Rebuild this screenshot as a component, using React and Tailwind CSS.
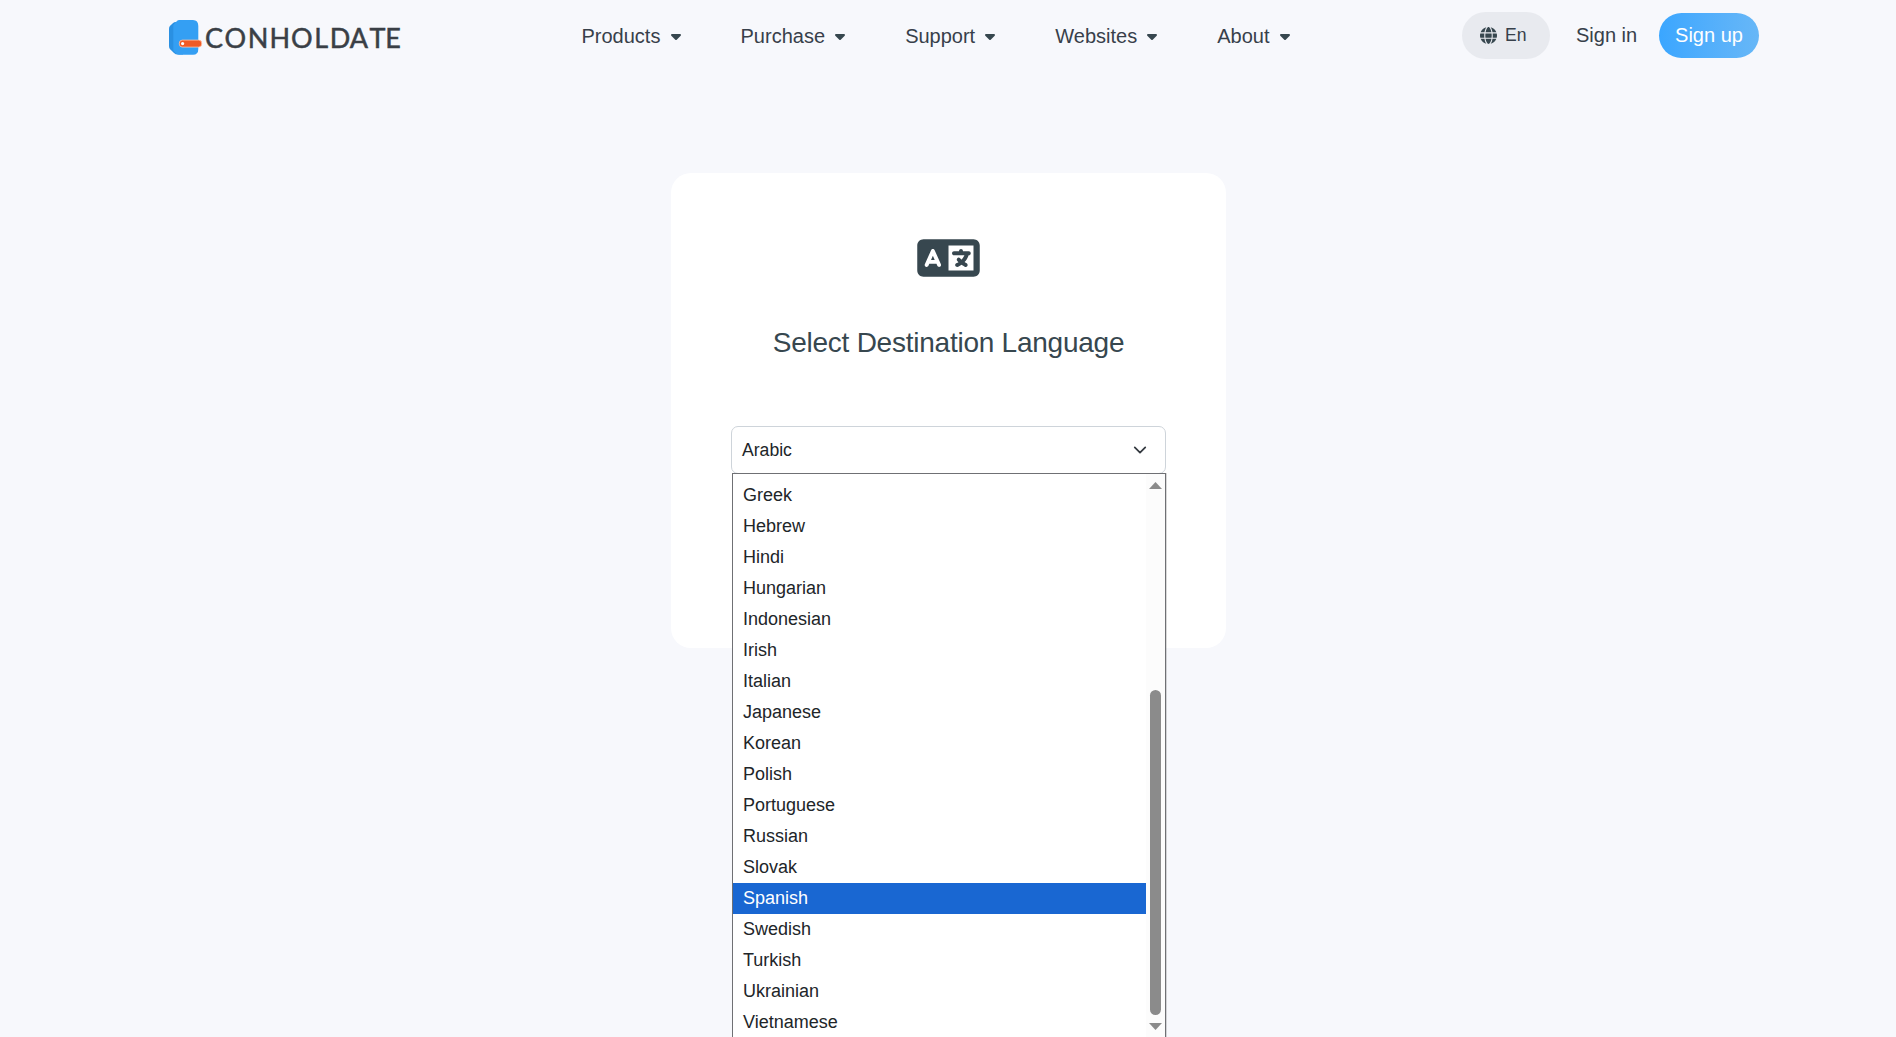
import { FaLanguage, FaCaretDown, FaGlobe } from "react-icons/fa6";

const menus = ["Products", "Purchase", "Support", "Websites", "About"];
const languages = [
  "Greek", "Hebrew", "Hindi", "Hungarian", "Indonesian", "Irish", "Italian", "Japanese", "Korean",
  "Polish", "Portuguese", "Russian", "Slovak", "Spanish", "Swedish", "Turkish", "Ukrainian", "Vietnamese",
];

function Logo() {
  return (
    <svg width="236" height="40" viewBox="0 0 236 40" className="block">
      <path d="M7 2Q5 2 3.800 3.200L.9 6Q0 7 0 9V26Q0 28 .9 29L5 33Q6.500 34.500 9 34.500H14V2Z" fill="#2a90e2" />
      <path d="M10 0H24Q29.300 0 29.300 6V29Q29.300 34.800 24 34.800H10Q8 34.800 6.500 33L4.300 30.500V5L7 2Q8.500 0 10 0Z" fill="#349ff3" />
      <rect x="10.300" y="20.100" width="22.400" height="7" rx="3" fill="#f15a24" stroke="#ffc4aa" strokeWidth="0.8" />
      <circle cx="13.600" cy="23.600" r="1.600" fill="#fff" />
      <text x="36 55.4 78.8 100.6 122 145.3 160.8 180.8 200.6 216.2" y="27.700" fontFamily="Lato" fontSize="27" fill="#3a3f46" stroke="#3a3f46" strokeWidth="0.5">CONHOLDATE</text>
    </svg>
  );
}

function Header() {
  return (
    <header className="flex h-[72px] pl-[169px] text-[20px] leading-[30px]">
      <div className="w-[412.5px] shrink-0 pt-[20px]"><Logo /></div>
      <nav className="flex w-[880.5px] shrink-0 gap-[59.8px] pt-[21px]">
        {menus.map((m) => (
          <a key={m} className="flex h-[30px] items-center gap-[10.3px]">
            {m}
            <FaCaretDown className="h-4 w-[10px] text-[#37474f]" />
          </a>
        ))}
      </nav>
      <div className="mt-[12px] flex h-[47px] w-[88px] shrink-0 items-center gap-2 rounded-full bg-[#e8eaef] pl-[18px] text-[17.6px]">
        <FaGlobe className="size-[17px] text-[#37474f]" />
        <span className="-mt-px">En</span>
      </div>
      <a className="w-[109px] shrink-0 pl-[26px] pt-[20px]">Sign in</a>
      <a className="mt-[13px] h-[45px] w-[100px] shrink-0 rounded-full bg-linear-to-r from-[#3aa6ff] to-[#67b7f7] pt-[7px] text-center text-white">Sign up</a>
    </header>
  );
}

function LanguageList() {
  return (
    <div className="absolute left-px top-[47px] flex h-[570px] w-[434px] border border-[#6f7074] bg-white shadow-[1px_0_0_rgba(0,0,0,0.15)]">
      <ul className="flex-1 pt-[6px]">
        {languages.map((l) => (
          <li key={l} className={l === "Spanish" ? "h-[31px] bg-[#1967d2] pl-[10px] leading-[30px] text-white" : "h-[31px] pl-[10px] leading-[30px]"}>
            {l}
          </li>
        ))}
      </ul>
      <div className="flex w-[19px] flex-col items-center bg-[#fcfcfc] pt-[8px]">
        <svg width="13" height="7"><path d="M0 7L6.500 0L13 7Z" fill="#8b8b8b" /></svg>
        <div className="mt-[201px] h-[325px] w-[11px] rounded-full bg-[#8b8b8b]" />
        <svg className="mt-[8px]" width="13" height="7"><path d="M0 0L6.500 7L13 0Z" fill="#8b8b8b" /></svg>
      </div>
    </div>
  );
}

export default function App() {
  return (
    <div className="h-[1037px] overflow-hidden bg-[#f7f8fc] pl-px font-['Liberation_Sans',Arial,sans-serif] text-[#37404a]">
      <div className="-ml-px"><Header /></div>
      <main className="mx-auto mt-[101px] flex h-[475px] w-[555px] flex-col items-center rounded-[20px] bg-white pt-[60px]">
        <FaLanguage className="h-[50px] w-[63px] text-[#37474f]" />
        <h1 className="mt-[39px] text-[28px] leading-[42px] tracking-[-0.24px] text-[#37474f]">Select Destination Language</h1>
        <div className="relative mt-[62px] h-[48px] w-[435px] text-[18px] text-[#212529]">
          <div className="flex h-full items-center justify-between rounded-[7px] border border-[#ced4da] pl-[10px] pr-[18px]">
            <span className="text-[17.6px]">Arabic</span>
            <svg width="14" height="14" viewBox="0 0 16 16" fill="none" stroke="#343a40" strokeWidth="2" strokeLinecap="round" strokeLinejoin="round"><path d="m2 5 6 6 6-6" /></svg>
          </div>
          <LanguageList />
        </div>
      </main>
    </div>
  );
}
